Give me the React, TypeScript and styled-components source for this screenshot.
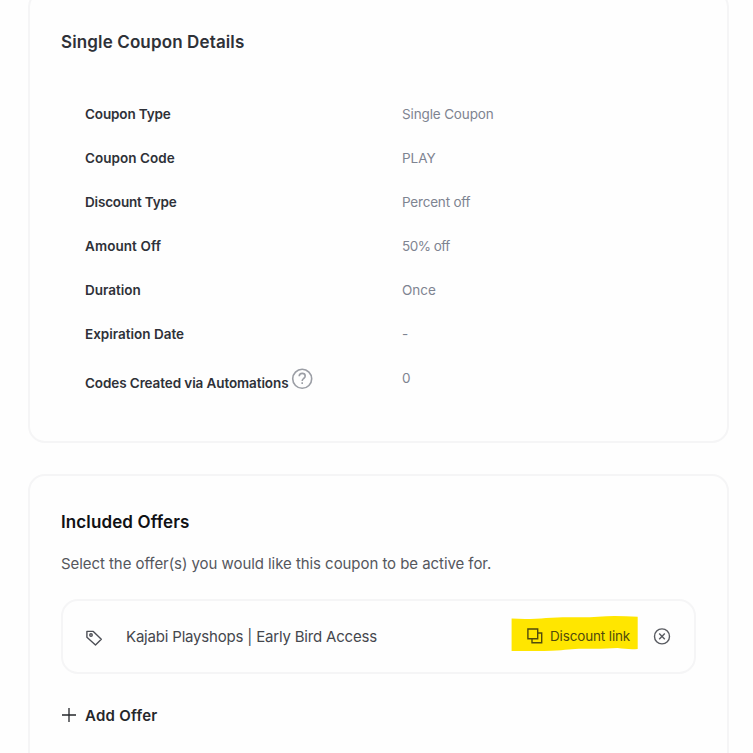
import React from "react";
import styled, { createGlobalStyle } from "styled-components";

const GlobalStyle = createGlobalStyle`
  * { box-sizing: border-box; }
  html, body { margin: 0; padding: 0; background: #fefefe; overflow: hidden; }
  body { font-family: Inter, "Liberation Sans", sans-serif; color: #2e3138; }
`;

const Page = styled.main`
  display: flex;
  flex-direction: column;
  gap: 32px;
  height: 753px;
  padding: 0 24px 0 28px;
  overflow: hidden;
`;

const Card = styled.section<{ $first?: boolean }>`
  flex: none;
  height: ${(p) => (p.$first ? 452.5 : 320)}px;
  margin-top: ${(p) => (p.$first ? -10 : -0.5)}px;
  padding: ${(p) => (p.$first ? 38 : 34)}px 31px 0;
  border: 2px solid #f5f5f6;
  border-radius: 17px;
  background: #fefefe;
`;

const Title = styled.h2<{ $tone: string; $track: number }>`
  margin: 0;
  font-size: 17px;
  line-height: 24px;
  font-weight: 600;
  letter-spacing: ${(p) => p.$track}px;
  color: ${(p) => p.$tone};
  white-space: nowrap;
`;

const Details = styled.dl`
  display: grid;
  grid-auto-rows: 44px;
  margin: 38px 0 0;
  padding: 0 24px;
`;

const DetailRow = styled.div`
  display: grid;
  grid-template-columns: 317px 1fr;
  line-height: 44px;
  white-space: nowrap;
`;

const Term = styled.dt<{ $track: number; $drop?: boolean }>`
  display: flex;
  align-items: center;
  height: 44px;
  padding-top: ${(p) => (p.$drop ? 9 : 0)}px;
  font-size: 13.5px;
  font-weight: 600;
  letter-spacing: ${(p) => p.$track}px;
`;

const Value = styled.dd<{ $track: number }>`
  margin: 0;
  font-size: 13.5px;
  letter-spacing: ${(p) => p.$track}px;
  color: #7e8491;
`;

const HelpIcon = styled.svg`
  flex: none;
  width: 22px;
  height: 22px;
  margin: -7px 0 0 3px;
  color: #9b9ea5;
`;

const Description = styled.p`
  margin: 18px 0 0;
  font-size: 15px;
  line-height: 24px;
  letter-spacing: -0.06px;
  color: #55575d;
  white-space: nowrap;
`;

const OfferCard = styled.div`
  display: flex;
  align-items: center;
  width: 635px;
  height: 75px;
  margin-top: 23px;
  padding: 0 23px 0 22px;
  border: 2px solid #f5f5f6;
  border-radius: 17px;
`;

const TagIcon = styled.svg`
  flex: none;
  width: 18px;
  height: 18px;
  margin-top: 3px;
  color: #4d4f56;
`;

const OfferName = styled.span`
  flex: 1;
  margin-left: 23px;
  font-size: 15px;
  letter-spacing: -0.19px;
  color: #45474d;
  white-space: nowrap;
`;

const DiscountLink = styled.button`
  position: relative;
  display: flex;
  align-items: center;
  width: 127px;
  height: 36px;
  margin: -6px 0 0;
  padding: 5px 0 0 16px;
  border: 0;
  background: none;
  font: inherit;
  font-size: 13.5px;
  color: #514b0c;
  white-space: nowrap;
`;

const Marker = styled.svg`
  position: absolute;
  inset: 0;
  width: 127px;
  height: 36px;
`;

const CopyIcon = styled.svg`
  position: relative;
  flex: none;
  width: 16px;
  height: 16px;
`;

const LinkText = styled.span`
  position: relative;
  margin-left: 7px;
  letter-spacing: -0.15px;
`;

const RemoveButton = styled.button`
  display: flex;
  margin: -1px 0 0 15px;
  padding: 0;
  border: 0;
  background: none;
  color: #595b61;
`;

const AddOffer = styled.button`
  display: flex;
  align-items: center;
  gap: 8px;
  height: 24px;
  margin: 29px 0 0;
  padding: 0;
  border: 0;
  background: none;
  font: inherit;
  font-size: 15px;
  font-weight: 600;
  color: #25272b;
`;

const AddLabel = styled.span`
  letter-spacing: 0.25px;
`;

const details = [
  { term: "Coupon Type", value: "Single Coupon", tt: -0.13, vt: -0.14 },
  { term: "Coupon Code", value: "PLAY", tt: 0.04, vt: 0 },
  { term: "Discount Type", value: "Percent off", tt: -0.18, vt: -0.2 },
  { term: "Amount Off", value: "50% off", tt: 0.08, vt: -0.5 },
  { term: "Duration", value: "Once", tt: 0, vt: 0 },
  { term: "Expiration Date", value: "-", tt: 0, vt: 0 },
  { term: "Codes Created via Automations", value: "0", tt: -0.1, vt: 0, help: true },
];

export default function App() {
  return (
    <>
      <GlobalStyle />
      <Page>
        <Card $first>
          <Title $tone="#2e3138" $track={0.13}>Single Coupon Details</Title>
          <Details>
            {details.map((d) => (
              <DetailRow key={d.term}>
                <Term $track={d.tt} $drop={d.help}>
                  {d.term}
                  {d.help && (
                    <HelpIcon viewBox="0 0 22 22" fill="none" stroke="currentColor" strokeWidth="1.6">
                      <circle cx="11.2" cy="10.8" r="9.5" />
                      <path d="M8.2 8.2C8.3 6.4 9.5 5.4 11.2 5.4s3 1 3 2.6c0 1.4-.9 2-1.7 2.6-.9.7-1.3 1.2-1.3 2.4" />
                      <path d="M11.2 14.2v1.9" />
                    </HelpIcon>
                  )}
                </Term>
                <Value $track={d.vt}>{d.value}</Value>
              </DetailRow>
            ))}
          </Details>
        </Card>

        <Card>
          <Title $tone="#101114" $track={0.12}>Included Offers</Title>
          <Description>Select the offer(s) you would like this coupon to be active for.</Description>
          <OfferCard>
            <TagIcon viewBox="0 0 18 18" fill="none" stroke="currentColor" strokeWidth="1.4" strokeLinejoin="round">
              <path d="M1.9 2.4h6.4l8 7.8-5.8 5.8-8.6-7.8z" />
              <circle cx="6" cy="6" r="1.25" />
            </TagIcon>
            <OfferName>Kajabi Playshops | Early Bird Access</OfferName>
            <DiscountLink type="button">
              <Marker viewBox="0 0 127 36">
                <path fill="#ffe600" d="M.6 2.6C13 3.4 25 3 35 2c20-1.8 35 0 52-1.3 13-1 26-.5 39.7 0V33c-7 .5-13 0-20-.9-10 .6-21 1-32 .6-14-.2-18 1.2-34 2C26 35.4 15 34.7.6 35z" />
              </Marker>
              <CopyIcon viewBox="0 0 16 16" fill="none" stroke="currentColor" strokeWidth="1.4">
                <path d="M.9 1h9.8v9.8H.9zM10.7 5h4v9.8H5v-4" />
              </CopyIcon>
              <LinkText>Discount link</LinkText>
            </DiscountLink>
            <RemoveButton type="button" aria-label="Remove offer">
              <svg width="18" height="18" viewBox="0 0 18 18" fill="none" stroke="currentColor" strokeWidth="1.4">
                <circle cx="9" cy="9.4" r="7.5" />
                <path d="m6.2 6.6 5.6 5.6m0-5.6-5.6 5.6" />
              </svg>
            </RemoveButton>
          </OfferCard>
          <AddOffer type="button">
            <svg width="16" height="16" viewBox="0 0 16 16" fill="none" stroke="currentColor" strokeWidth="1.3">
              <path d="M8 1v14M1 8h14" />
            </svg>
            <AddLabel>Add Offer</AddLabel>
          </AddOffer>
        </Card>
      </Page>
    </>
  );
}
